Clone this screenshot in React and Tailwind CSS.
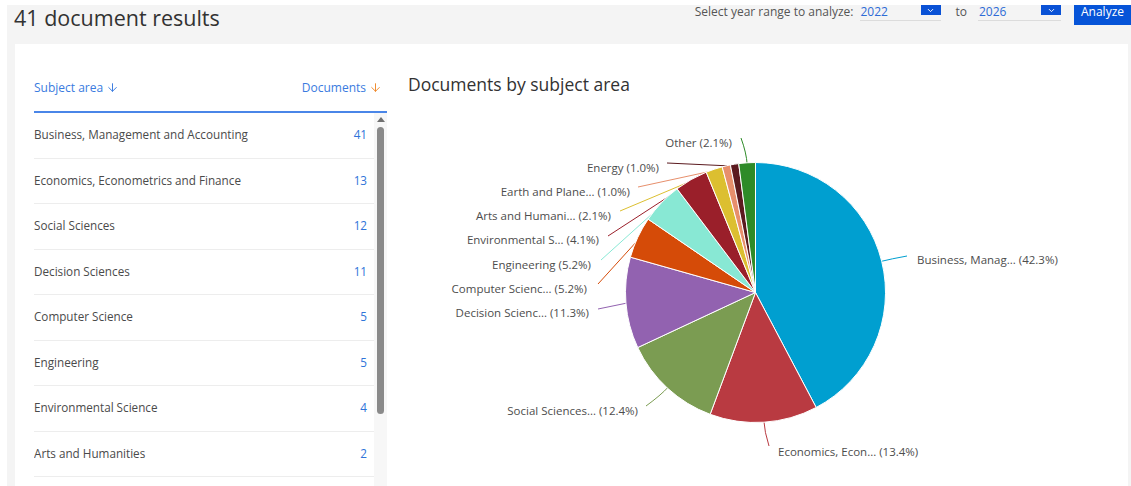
import React from "react";
import { ArrowDown, ChevronDown } from "lucide-react";

const subjects = [
  ["Business, Management and Accounting", 41],
  ["Economics, Econometrics and Finance", 13],
  ["Social Sciences", 12],
  ["Decision Sciences", 11],
  ["Computer Science", 5],
  ["Engineering", 5],
  ["Environmental Science", 4],
  ["Arts and Humanities", 2],
];

// pie slices, clockwise from 12 o'clock; tx/ty = label anchor, lx/ly = connector start
const slices = [
  { v: 41, color: "#009fd0", label: "Business, Manag... (42.3%)", side: "r", tx: 917, ty: 260, lx: 907, ly: 256, curve: true },
  { v: 13, color: "#b93a41", label: "Economics, Econ... (13.4%)", side: "r", tx: 778, ty: 452, lx: 769, ly: 446, curve: true },
  { v: 12, color: "#7b9c52", label: "Social Sciences... (12.4%)", side: "l", tx: 638, ty: 411, lx: 646, ly: 406, curve: true },
  { v: 11, color: "#9262b0", label: "Decision Scienc... (11.3%)", side: "l", tx: 589, ty: 313, lx: 598, ly: 309 },
  { v: 5, color: "#d54b08", label: "Computer Scienc... (5.2%)", side: "l", tx: 587, ty: 289, lx: 598, ly: 284 },
  { v: 5, color: "#88e8d4", label: "Engineering (5.2%)", side: "l", tx: 591, ty: 265, lx: 601, ly: 260 },
  { v: 4, color: "#9a1f2a", label: "Environmental S... (4.1%)", side: "l", tx: 599, ty: 240, lx: 608, ly: 236 },
  { v: 2, color: "#dcbf30", label: "Arts and Humani... (2.1%)", side: "l", tx: 611, ty: 216, lx: 620, ly: 211 },
  { v: 1, color: "#e78f6c", label: "Earth and Plane... (1.0%)", side: "l", tx: 630, ty: 192, lx: 638, ly: 187 },
  { v: 1, color: "#5b1a1f", label: "Energy (1.0%)", side: "l", tx: 659, ty: 168, lx: 667, ly: 163 },
  { v: 2, color: "#2e8b28", label: "Other (2.1%)", side: "l", tx: 732, ty: 143, lx: 741, ly: 138, curve: true },
];

const CX = 755.5;
const CY = 292.5;
const R = 130;

function pt(deg, r) {
  const a = (deg * Math.PI) / 180;
  return [CX + r * Math.sin(a), CY - r * Math.cos(a)];
}

function Pie() {
  const total = slices.reduce((s, d) => s + d.v, 0);
  let acc = 0;
  const parts = slices.map((d) => {
    const a0 = (acc / total) * 360;
    acc += d.v;
    const a1 = (acc / total) * 360;
    const mid = (a0 + a1) / 2;
    const [x0, y0] = pt(a0, R);
    const [x1, y1] = pt(a1, R);
    const large = a1 - a0 > 180 ? 1 : 0;
    const path = `M${CX},${CY} L${x0},${y0} A${R},${R} 0 ${large} 1 ${x1},${y1} Z`;
    const [ex, ey] = pt(mid, R - 2);
    const [cx, cy] = pt(mid, R + 10);
    const conn = d.curve
      ? `M${d.lx},${d.ly} Q${cx},${cy} ${ex},${ey}`
      : `M${d.lx},${d.ly} L${ex},${ey}`;
    return { ...d, path, conn };
  });
  return (
    <svg width="728" height="386" viewBox="400 100 728 386" className="block">
      {parts.map((p, i) => (
        <path key={"c" + i} d={p.conn} fill="none" stroke={p.color} strokeWidth="1" />
      ))}
      {parts.map((p, i) => (
        <path key={"s" + i} d={p.path} fill={p.color} stroke="#ffffff" strokeWidth="1" strokeLinejoin="round" />
      ))}
      {parts.map((p, i) => (
        <text
          key={"t" + i}
          x={p.tx}
          y={p.ty + 4}
          textAnchor={p.side === "l" ? "end" : "start"}
          fontSize="11.5"
          fill="#4d4d4d"
          fontFamily="'Open Sans', sans-serif"
        >
          {p.label}
        </text>
      ))}
    </svg>
  );
}

function YearSelect({ value, width }) {
  return (
    <div className={`relative h-[16px] border-b border-[#dcdcdc] ${width}`}>
      <span className="absolute left-[1px] top-[-1px] text-[12px] leading-[16px] text-[#2d6bd6]">{value}</span>
      <span className="absolute right-0 top-0 flex h-[10px] w-[20px] items-end justify-center bg-[#0a52d6]">
        <ChevronDown size={9} strokeWidth={2.5} color="#ffffff" />
      </span>
    </div>
  );
}

export default function App() {
  return (
    <div
      className="h-[486px] w-[1131px] overflow-hidden bg-white pl-[7px] pt-[5px]"
      style={{ fontFamily: "'Open Sans', sans-serif" }}
    >
      <div className="flex h-full flex-col bg-[#f4f4f4]">
        <header className="flex h-[39px] shrink-0 items-start justify-between pl-[7px]">
          <h1 className="mt-[-1px] text-[21.5px] leading-[28px] text-[#323232]">41 document results</h1>
          <div className="flex items-start">
            <span className="mt-[-1px] text-[12px] leading-[16px] text-[#555]">Select year range to analyze:</span>
            <div className="ml-[6px]">
              <YearSelect value="2022" width="w-[81px]" />
            </div>
            <span className="ml-[15px] mt-[-1px] text-[12px] leading-[16px] text-[#555]">to</span>
            <div className="ml-[11px]">
              <YearSelect value="2026" width="w-[83px]" />
            </div>
            <button className="ml-[13px] h-[20px] w-[57px] bg-[#0654d8] text-[12px] leading-[14px] text-white">
              <span className="block -mt-[6px]">Analyze</span>
            </button>
          </div>
        </header>

        <div className="ml-[8px] mr-[3px] flex flex-1 bg-white">
          {/* subject table */}
          <div className="flex w-[372px] shrink-0 flex-col pl-[19px]">
            <div className="flex h-[69px] shrink-0 items-end justify-between border-b-2 border-[#4a86e8] pb-[15px] text-[12px] leading-[17px] text-[#3a7be0]">
              <span className="flex items-center gap-[3px]">
                Subject area <ArrowDown size={13} strokeWidth={1.8} color="#3a7be0" />
              </span>
              <span className="flex items-center gap-[3px] pr-[5px]">
                Documents <ArrowDown size={13} strokeWidth={1.8} color="#f08a2c" />
              </span>
            </div>
            <div className="flex flex-1 overflow-hidden">
              <ul className="w-[340px] shrink-0">
                {subjects.map(([name, n]) => (
                  <li
                    key={name}
                    className="flex h-[45.5px] items-center justify-between border-b border-[#ededed] pr-[7px] text-[11.7px] text-[#4a4a4a]"
                  >
                    <span>{name}</span>
                    <span className="text-[#2f74d9]">{n}</span>
                  </li>
                ))}
              </ul>
              <div className="flex w-[13px] flex-col items-center bg-[#f7f7f7]">
                <div className="mt-[4px] h-0 w-0 border-x-[4px] border-b-[5px] border-x-transparent border-b-[#707070]" />
                <div className="mt-[5px] h-[287px] w-[7px] rounded-[4px] bg-[#8a8a8a]" />
              </div>
            </div>
          </div>

          {/* chart */}
          <div className="ml-[13px] flex flex-1 flex-col">
            <h2 className="mt-[28px] pl-[8px] text-[17.5px] leading-[24px] text-[#323232]">Documents by subject area</h2>
            <div className="mt-[4px]">
              <Pie />
            </div>
          </div>
        </div>
      </div>
    </div>
  );
}
